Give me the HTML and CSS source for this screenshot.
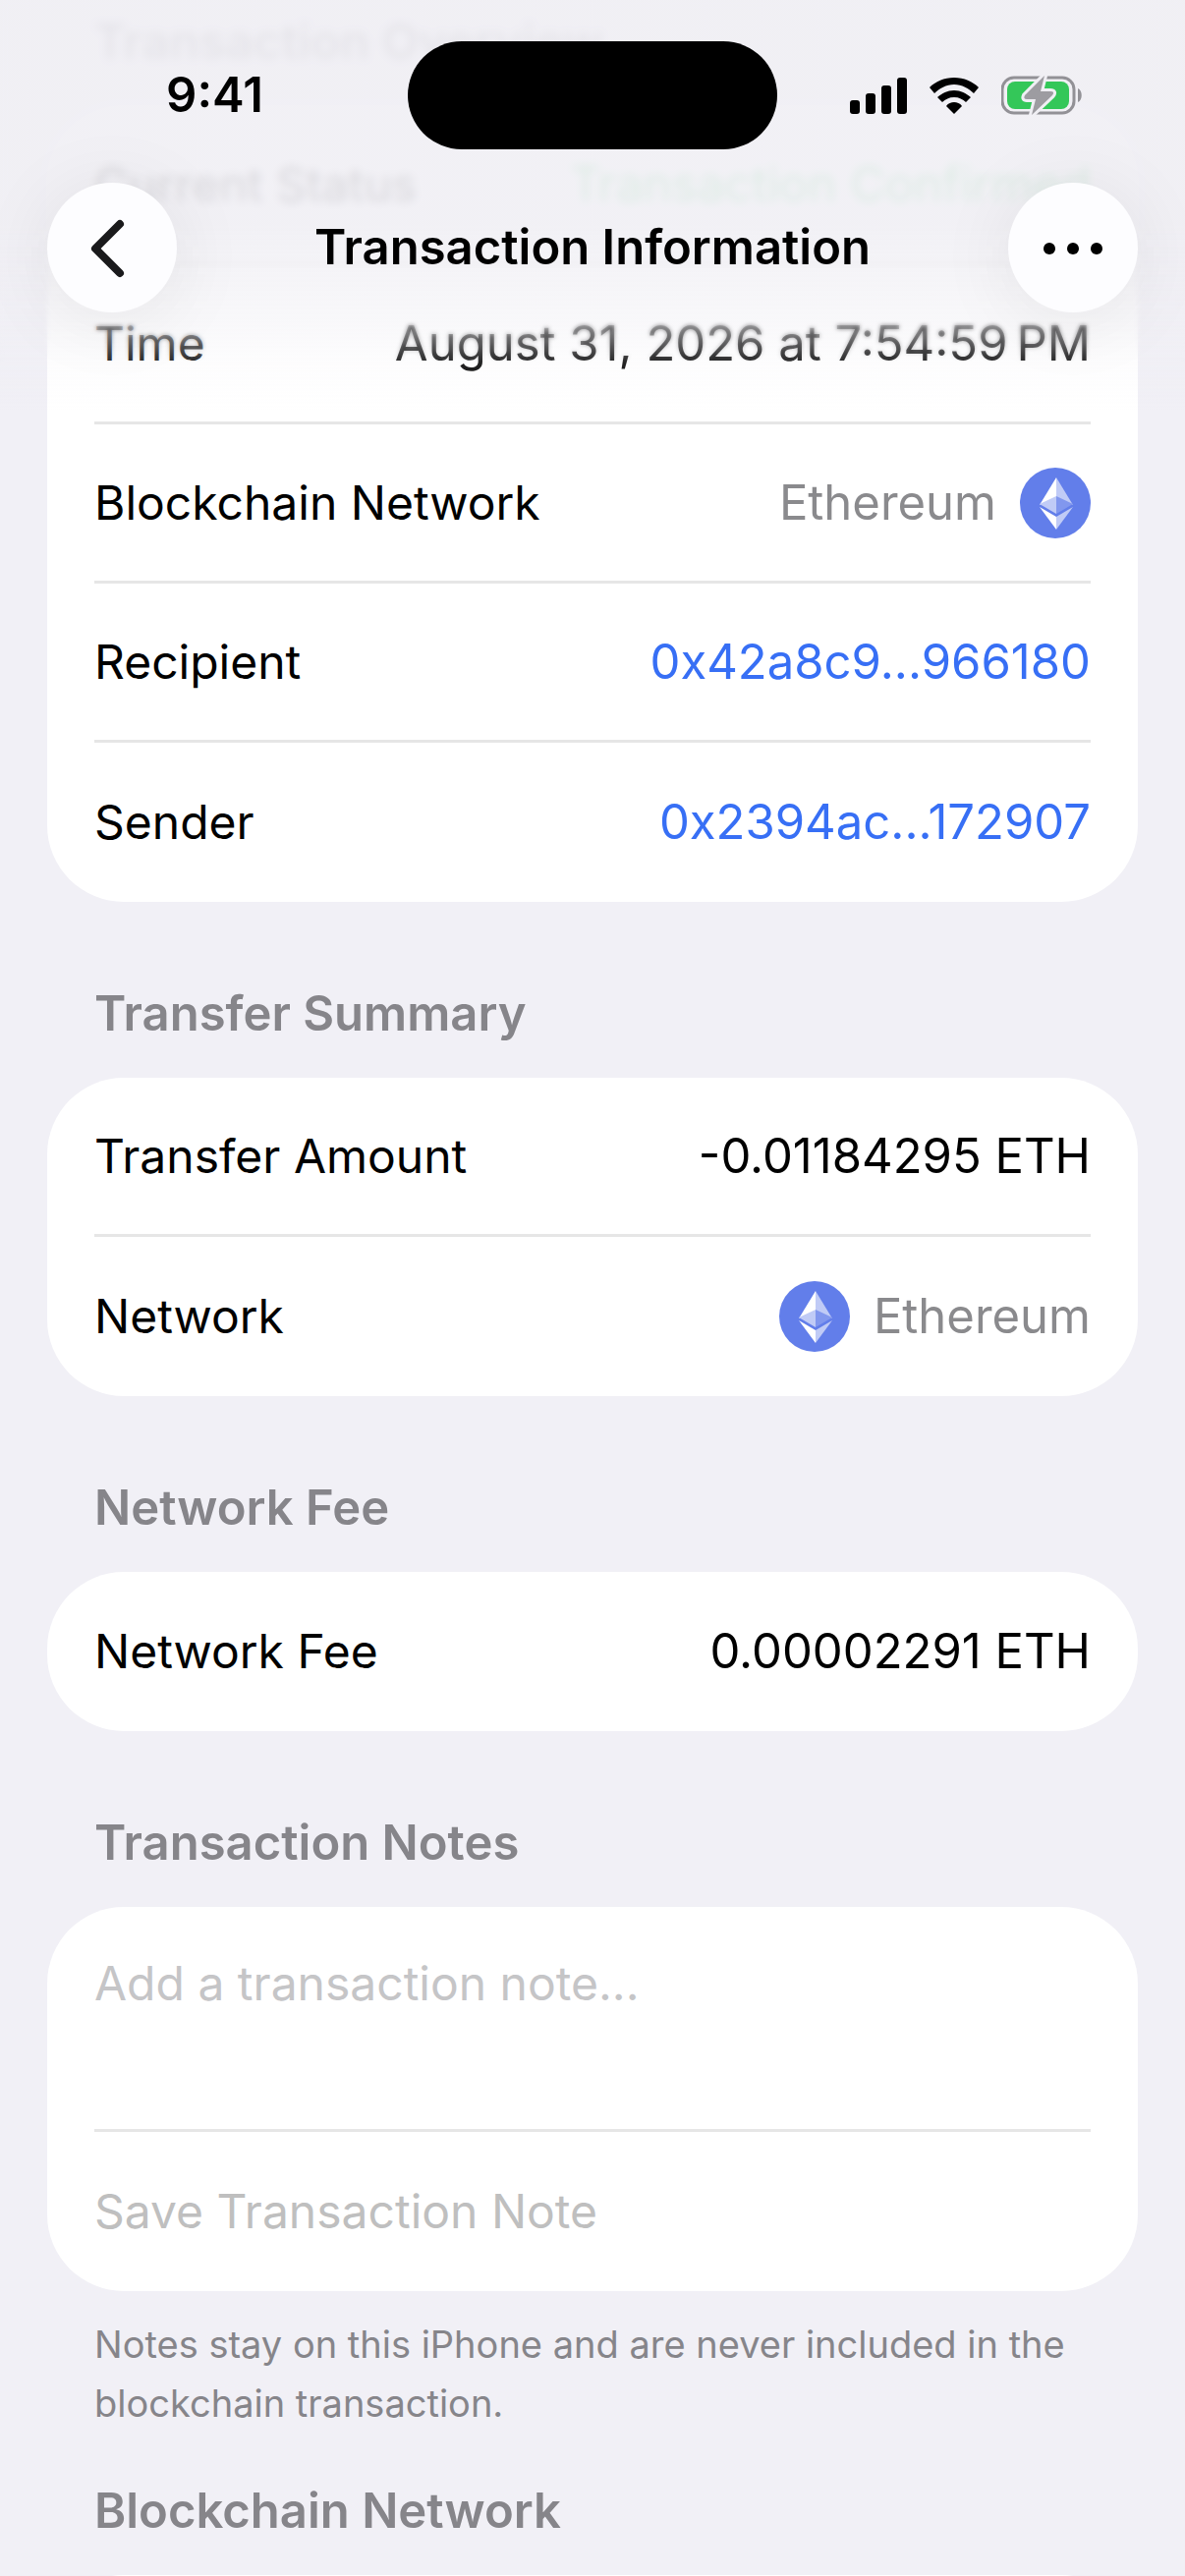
FILE: index.html
```html
<!DOCTYPE html>
<html lang="en">
<head>
    <meta charset="UTF-8">
    <meta name="viewport" content="width=device-width, initial-scale=1.0">
    <title>Transaction Information</title>
    <link rel="stylesheet" href="styles.css">
</head>
<body>
    <svg width="0" height="0" class="sprite" aria-hidden="true">
        <symbol id="eth" viewBox="0 0 72 72">
            <circle cx="36" cy="36" r="36" fill="#627eea"/>
            <path fill="#fff" d="M37 10 20 38l17-8z"/>
            <path fill="#c0cbf6" d="M37 10v20l17 8z"/>
            <path fill="#c0cbf6" d="M37 29 20 37l17 10z"/>
            <path fill="#8197ee" d="M37 29v18l17-10z"/>
            <path fill="#fff" d="M20 40l17 23V50z"/>
            <path fill="#c0cbf6" d="M37 63V50l17-10z"/>
        </symbol>
    </svg>

    <header class="top">
        <div class="blur blur-soft"></div>
        <div class="blur blur-strong"></div>
        <div class="fade"></div>
        <div class="status-bar">
            <div class="clock">9:41</div>
            <div class="island"></div>
            <div class="status-icons">
                <svg width="58" height="38" viewBox="0 0 58 38">
                    <rect x="0" y="24" width="10" height="14" rx="3"/>
                    <rect x="16" y="17" width="10" height="21" rx="3"/>
                    <rect x="32" y="9" width="10" height="29" rx="3"/>
                    <rect x="48" y="1" width="10" height="37" rx="3"/>
                </svg>
                <svg width="52" height="38" viewBox="0 0 52 38">
                    <path d="M26 1C16 1 7 5 1 11l5 6C11 12 18 8 26 8s15 4 20 9l5-6C45 5 36 1 26 1z"/>
                    <path d="M26 14c-7 0-12 3-17 7l5 5c3-3 7-5 12-5s9 2 12 5l5-5c-5-4-10-7-17-7z"/>
                    <path d="M26 26c-3 0-6 1-8 4l8 8 8-8c-2-3-5-4-8-4z"/>
                </svg>
                <svg width="82" height="40" viewBox="0 0 82 40">
                    <rect x="1" y="2" width="73" height="36" rx="12" fill="none" stroke="#929196" stroke-width="3"/>
                    <path d="M78 13c5 2 5 12 0 14z" fill="#929196"/>
                    <rect x="6" y="6" width="63" height="28" rx="8" fill="#34c759"/>
                    <path d="M44 0 24 20q-2 4 2 4h9l-4 16 21-20q3-4-2-4H40z" fill="#9d9ca1" stroke="#f0eff4" stroke-width="6" stroke-linejoin="round" paint-order="stroke"/>
                </svg>
            </div>
        </div>
        <nav class="nav-bar">
            <button class="round-btn" type="button" aria-label="Back">
                <svg width="132" height="132" viewBox="0 0 132 132"><path d="M74 42 49 67l25 25" fill="none" stroke="#1a1a1c" stroke-width="8" stroke-linecap="round" stroke-linejoin="round"/></svg>
            </button>
            <h1>Transaction Information</h1>
            <button class="round-btn" type="button" aria-label="More">
                <svg width="132" height="132" viewBox="0 0 132 132"><circle cx="42" cy="67" r="6"/><circle cx="66" cy="67" r="6"/><circle cx="90" cy="67" r="6"/></svg>
            </button>
        </nav>
    </header>

    <main>
        <section>
            <h2>Transaction Overview</h2>
            <div class="card">
                <div class="row"><span>Current Status</span><span class="value green">Transaction Confirmed</span></div>
                <div class="row"><span>Time</span><span class="value">August 31, 2026 at 7:54:59&#8239;PM</span></div>
                <div class="row"><span>Blockchain Network</span><span class="value grey">Ethereum <svg width="72" height="72"><use href="#eth"/></svg></span></div>
                <div class="row"><span>Recipient</span><a class="value" href="#">0x42a8c9...966180</a></div>
                <div class="row"><span>Sender</span><a class="value" href="#">0x2394ac...172907</a></div>
            </div>
        </section>

        <section>
            <h2>Transfer Summary</h2>
            <div class="card">
                <div class="row"><span>Transfer Amount</span><span class="value">-0.01184295 ETH</span></div>
                <div class="row"><span>Network</span><span class="value grey"><svg width="72" height="72"><use href="#eth"/></svg> Ethereum</span></div>
            </div>
        </section>

        <section>
            <h2>Network Fee</h2>
            <div class="card">
                <div class="row"><span>Network Fee</span><span class="value">0.00002291 ETH</span></div>
            </div>
        </section>

        <section>
            <h2 id="notesTitle">Transaction Notes</h2>
            <form class="card">
                <textarea id="note" rows="2" placeholder="Add a transaction note..." aria-labelledby="notesTitle"></textarea>
                <button class="row save" type="submit" disabled>Save Transaction Note</button>
            </form>
            <p class="footnote">Notes stay on this iPhone and are never included in the blockchain transaction.</p>
        </section>

        <section>
            <h2>Blockchain Network</h2>
            <div class="card"><div class="row"></div></div>
        </section>
    </main>
</body>
</html>
```
FILE: styles.css
```css
* { box-sizing: border-box; }
body { margin: 0; height: 100vh; overflow: hidden; background: #f1f0f6; color: #000; font-family: Inter, "Liberation Sans", sans-serif; font-size: 48px; line-height: 60px; }
h1, h2 { margin: 0; font-size: 49px; line-height: 60px; font-weight: 600; }
a { color: #376ff5; text-decoration: none; }
svg { display: block; flex: none; }
.sprite { position: absolute; }

/* header floats over the scrolled list */
.top { position: fixed; top: 0; left: 0; right: 0; z-index: 1; padding-top: 42px; }
.blur, .fade { position: absolute; top: 0; left: 0; right: 0; height: 420px; z-index: -1; }
.blur-soft { backdrop-filter: blur(2px); mask-image: linear-gradient(#000 320px, transparent 370px); }
.blur-strong { backdrop-filter: blur(4px); mask-image: linear-gradient(#000 240px, transparent 320px); }
.fade { background: linear-gradient(rgba(240, 239, 244, 0.9), rgba(240, 239, 244, 0.9) 230px, rgba(240, 239, 244, 0.45) 325px, rgba(240, 239, 244, 0.14) 370px, rgba(240, 239, 244, 0)); }

.status-bar { display: grid; grid-template-columns: 1fr 376px 1fr; align-items: center; }
.clock { padding-left: 22px; text-align: center; font-size: 49px; font-weight: 600; }
.island { height: 110px; border-radius: 55px; background: #000; }
.status-icons { display: flex; justify-content: center; align-items: center; gap: 22px; padding-right: 32px; }

.nav-bar { display: flex; justify-content: space-between; align-items: center; padding: 34px 48px 0; }
.round-btn { width: 132px; height: 132px; padding: 0; border: none; border-radius: 50%; background: #fdfdff; box-shadow: 0 8px 80px rgba(0, 0, 0, 0.08); cursor: pointer; }

main { padding: 13px 48px 0; }
h2 { padding: 0 48px; margin-bottom: 35px; color: #86858a; }
section { margin-bottom: 84px; }
.card { padding: 0 48px; border-radius: 78px; background: #fff; }
.row { display: flex; justify-content: space-between; align-items: center; height: 162px; border-bottom: 3px solid #e6e6e6; }
.row:last-child { border-bottom: none; }
.value { display: flex; align-items: center; gap: 24px; font-size: 49px; }
.grey { color: #8a8a8d; }
.green { color: #34c759; }

textarea { display: block; width: 100%; height: 229px; padding: 48px 0 0; border: none; border-bottom: 3px solid #e6e6e6; background: none; font: inherit; resize: none; outline: none; }
textarea::placeholder { color: #c5c5c7; }
.save { width: 100%; padding: 0; border: none; background: none; font: inherit; color: #bfbfbf; }
.footnote { margin: 24px 48px -34px; font-size: 38px; color: #86858a; }
```
